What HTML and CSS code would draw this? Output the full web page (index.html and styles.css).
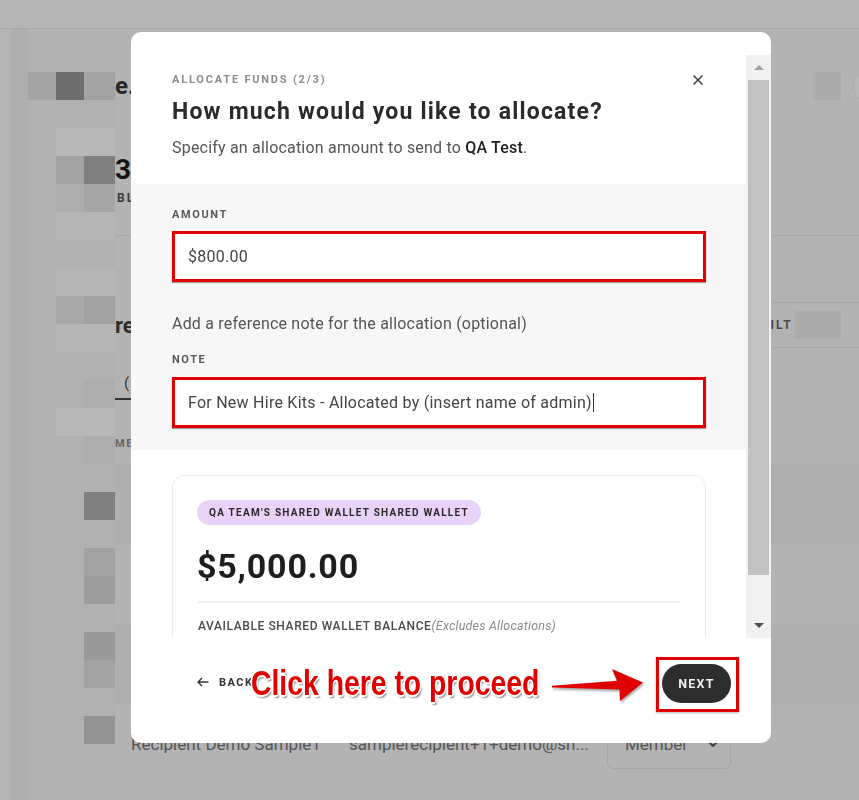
FILE: index.html
```html
<!DOCTYPE html>
<html lang="en">
<head>
<meta charset="utf-8">
<title>Allocate Funds</title>
<link rel="stylesheet" href="styles.css">
</head>
<body>
<div class="app">
  <header class="topbar"></header>
  <div class="app-body">
    <aside class="sidebar"><span class="strip strip-a"></span><span class="strip strip-b"></span></aside>
    <div class="mosaic" aria-hidden="true">
      <i class="k1"></i><i class="k2"></i><i class="k3"></i>
      <i class="ka"></i><i class="ka"></i><i class="ka"></i>
      <i class="ka"></i><i class="kb"></i><i class="kb"></i>
      <i class="ka"></i><i class="k3"></i><i class="k4"></i>
      <i class="ka"></i><i class="k5"></i><i class="k6"></i>
      <i class="ka"></i><i class="kl"></i><i class="kl"></i>
      <i class="ka"></i><i class="ka"></i><i class="ka"></i>
      <i class="ka"></i><i class="kl"></i><i class="kl"></i>
      <i class="ka"></i><i class="k7"></i><i class="k8"></i>
      <i class="ka"></i><i class="kl"></i><i class="kl"></i>
      <i class="ka"></i><i class="ka"></i><i class="ka"></i>
      <i class="ka"></i><i class="ka"></i><i class="k5"></i>
      <i class="ka"></i><i class="kb"></i><i class="kb"></i>
      <i class="ka"></i><i class="ka"></i><i class="k5"></i>
      <i class="ka"></i><i class="ka"></i><i class="ka"></i>
      <i class="ka"></i><i class="ka"></i><i class="k4"></i>
      <i class="ka"></i><i class="ka"></i><i class="ka"></i>
      <i class="ka"></i><i class="ka"></i><i class="k3"></i>
      <i class="ka"></i><i class="ka"></i><i class="k9"></i>
      <i class="ka"></i><i class="ka"></i><i class="ka"></i>
      <i class="ka"></i><i class="ka"></i><i class="k10"></i>
      <i class="ka"></i><i class="ka"></i><i class="k3"></i>
      <i class="ka"></i><i class="ka"></i><i class="ka"></i>
      <i class="ka"></i><i class="ka"></i><i class="k11"></i>
    </div>
    <main class="main">
      <section class="hero">
        <div class="hero-row">
          <h1 class="page-title">e.</h1>
          <div class="hero-right"><span class="redact"></span><span class="avatar"></span></div>
        </div>
        <div class="balance">30</div>
        <div class="balance-label">BL</div>
      </section>
      <section class="members">
        <div class="members-head">
          <h2 class="section-title">re</h2>
          <div class="filter-btn">FILT<span class="redact"></span></div>
        </div>
        <div class="tabs"><span class="tab">(</span></div>
        <div class="table-head"><span>ME</span></div>
        <div class="table-row striped"></div>
        <div class="table-row"></div>
        <div class="table-row striped"></div>
        <div class="table-row">
          <span class="cell-name">Recipient Demo Sample1</span>
          <span class="cell-email">samplerecipient+1+demo@sn...</span>
          <span class="cell-role">Member
            <svg class="chev" viewBox="0 0 10 6" width="10" height="6"><path d="M1 1l4 4 4-4" fill="none" stroke="#3a3a3a" stroke-width="1.8"/></svg>
          </span>
        </div>
      </section>
    </main>
  </div>
</div>

<div class="modal" role="dialog" aria-labelledby="modal-title">
  <div class="modal-scroll">
    <div class="modal-content">
      <header class="modal-head">
        <div class="head-text">
          <p class="step">ALLOCATE FUNDS (2/3)</p>
          <h1 class="title" id="modal-title">How much would you like to allocate?</h1>
          <p class="subtitle">Specify an allocation amount to send to <strong>QA Test</strong>.</p>
        </div>
        <button class="close" aria-label="Close">
          <svg viewBox="0 0 10 10" width="10" height="10"><path d="M0.5 0.5l9 9M9.5 0.5l-9 9" stroke="#333" stroke-width="1.4" fill="none"/></svg>
        </button>
      </header>

      <section class="form">
        <div class="field-label">AMOUNT</div>
        <div class="field">$800.00</div>
        <p class="hint">Add a reference note for the allocation (optional)</p>
        <div class="field-label">NOTE</div>
        <div class="field field-note">For New Hire Kits - Allocated by (insert name of admin)<span class="caret"></span></div>
      </section>

      <section class="wallet">
        <div class="wallet-card">
          <span class="pill">QA TEAM'S SHARED WALLET SHARED WALLET</span>
          <div class="wallet-amount">$5,000.00</div>
          <hr class="wallet-divider">
          <p class="wallet-label">AVAILABLE SHARED WALLET BALANCE<em>(Excludes Allocations)</em></p>
        </div>
      </section>
    </div>
    <div class="scrollbar" aria-hidden="true">
      <span class="sb-btn sb-up"></span>
      <span class="sb-thumb"></span>
      <span class="sb-track"></span>
      <span class="sb-btn sb-down"></span>
    </div>
  </div>

  <footer class="modal-foot">
    <button class="back">
      <svg viewBox="0 0 12 10" width="12" height="10"><path d="M11.5 5H1M5 1L1 5l4 4" fill="none" stroke="#333" stroke-width="1.4"/></svg>
      BACK
    </button>
    <span class="highlight"><button class="next">NEXT</button></span>
    <div class="callout">Click here to proceed</div>
    <svg class="callout-arrow" viewBox="0 0 100 42" width="100" height="42" aria-hidden="true">
      <polygon points="4,21.8 69,16.8 64,5 95,18.5 72,37 71.5,25.5 4,23.4" fill="#e00000"/>
    </svg>
  </footer>
</div>
</body>
</html>
```

FILE: styles.css
```css
* { box-sizing: border-box; }

html, body {
  margin: 0;
  height: 100%;
}

body {
  font-family: Roboto, "Noto Sans", sans-serif;
  background: #b3b3b3;
  overflow: hidden;
}

/* ---------- dimmed background page ---------- */
.app {
  display: flex;
  flex-direction: column;
  min-height: 100vh;
}

.topbar {
  height: 29px;
  background: #b5b5b5;
  border-bottom: 1px solid #a9a9a9;
  flex: none;
}

.app-body {
  display: flex;
  flex: 1;
}

.sidebar {
  display: flex;
  width: 28px;
  flex: none;
}

.strip { display: block; }
.strip-a { width: 11px; background: #b4b4b4; }
.strip-b { width: 17px; background: #afafaf; }

.mosaic {
  display: grid;
  grid-template-columns: 28px 28px 31px;
  grid-auto-rows: 28px;
  align-content: start;
  padding-top: 43px;
  width: 87px;
  flex: none;
}
.mosaic i { display: block; }
.ka { background: #b1b1b1; }
.kb { background: #b8b8b8; }
.kl { background: #b5b5b5; }
.k1 { background: #a4a4a4; }
.k2 { background: #6e6e6e; }
.k3 { background: #a3a3a3; }
.k4 { background: #808080; }
.k5 { background: #adadad; }
.k6 { background: #a6a6a6; }
.k7 { background: #a9a9a9; }
.k8 { background: #a2a2a2; }
.k9 { background: #9c9c9c; }
.k10 { background: #999999; }
.k11 { background: #939393; }

.main {
  flex: 1;
  min-width: 0;
  overflow: hidden;
}

.hero {
  padding-top: 43px;
  padding-bottom: 23px;
  border-bottom: 1px solid #a6a6a6;
}

.hero-row {
  display: flex;
  justify-content: space-between;
  align-items: center;
  height: 28px;
}

.page-title {
  margin: 0;
  font-size: 24px;
  line-height: 28px;
  font-weight: 700;
  color: #262626;
}

.hero-right {
  display: flex;
  align-items: center;
  gap: 12px;
  margin-right: -30px;
}

.redact {
  display: inline-block;
  width: 28px;
  height: 28px;
  background: #acacac;
}

.avatar {
  width: 36px;
  height: 36px;
  border-radius: 50%;
  background: #b8b8b8;
  border: 1px solid #aaaaaa;
}

.balance {
  margin-top: 56px;
  font-size: 28px;
  line-height: 28px;
  font-weight: 700;
  color: #141414;
}

.balance-label {
  padding-left: 2px;
  font-size: 12px;
  line-height: 28px;
  font-weight: 700;
  letter-spacing: 2px;
  color: #3a3a3a;
}

.members { margin-top: 66px; }

.members-head {
  display: flex;
  justify-content: space-between;
  align-items: center;
  height: 46px;
}

.section-title {
  margin: 0;
  font-size: 22px;
  font-weight: 700;
  color: #2e2e2e;
}

.filter-btn {
  display: flex;
  align-items: center;
  gap: 2px;
  width: 146px;
  height: 46px;
  margin-right: -30px;
  padding-left: 18px;
  border: 1px solid #a6a6a6;
  border-radius: 4px;
  font-size: 12px;
  font-weight: 700;
  letter-spacing: 2px;
  color: #4a4a4a;
}
.filter-btn .redact { width: 46px; background: #ababab; }

.tabs {
  margin-top: 20px;
  display: flex;
}

.tab {
  padding: 0 0 0 9px;
  width: 40px;
  line-height: 30px;
  font-size: 15px;
  color: #333;
  border-bottom: 2px solid #333;
}

.table-head {
  margin-top: 36px;
  line-height: 16px;
  font-size: 11px;
  font-weight: 700;
  letter-spacing: 1.5px;
  color: #666;
}

.table-row {
  height: 80px;
  display: grid;
  grid-template-columns: 218px 258px 124px;
  align-items: center;
  padding-left: 16px;
}
.table-head + .table-row { margin-top: 12px; }
.table-row.striped { background: #afafaf; }

.cell-name, .cell-email {
  font-size: 17px;
  color: #555;
}

.cell-role {
  display: flex;
  align-items: center;
  justify-content: space-between;
  height: 49px;
  padding: 0 12px 0 17px;
  border: 1px solid #a6a6a6;
  border-radius: 6px;
  font-size: 17px;
  color: #555;
}

/* ---------- modal ---------- */
.modal {
  position: fixed;
  left: 131px;
  top: 32px;
  width: 640px;
  height: 711px;
  background: #fff;
  border-radius: 10px;
  padding-top: 23px;
  display: flex;
  flex-direction: column;
  overflow: hidden;
}

.modal-scroll {
  flex: 0 0 583px;
  display: flex;
  overflow: hidden;
}

.modal-content {
  flex: 1;
  min-width: 0;
  overflow: hidden;
}

.modal-head {
  display: flex;
  justify-content: space-between;
  align-items: flex-start;
  padding: 17px 40px 25px 41px;
}

.step {
  margin: 0;
  font-size: 11px;
  line-height: 16px;
  font-weight: 700;
  letter-spacing: 1.8px;
  color: #8d8d8d;
}

.title {
  margin: 9px 0 0;
  font-size: 23px;
  line-height: 30px;
  font-weight: 700;
  letter-spacing: 1.2px;
  color: #2b2b2b;
}

.subtitle {
  margin: 10px 0 0;
  font-size: 16px;
  line-height: 22px;
  letter-spacing: 0.2px;
  color: #555;
}
.subtitle strong { font-weight: 500; color: #222; }

.close {
  margin: 3px 3px 0 0;
  padding: 0;
  border: 0;
  background: none;
  display: flex;
}

.form {
  background: #f7f7f7;
  padding: 23px 40px 22px 41px;
}

.field-label {
  font-size: 11px;
  line-height: 16px;
  font-weight: 700;
  letter-spacing: 1.6px;
  color: #5a5a5a;
}

.field {
  margin-top: 8px;
  height: 51px;
  display: flex;
  align-items: center;
  padding: 0 13px;
  border: 3px solid #e00000;
  background: #fff;
  box-shadow: 0 1px 1px rgba(0, 0, 0, 0.35);
  font-size: 16px;
  letter-spacing: 0.25px;
  color: #444;
}
.field-note { margin-top: 9px; }

.caret {
  width: 1px;
  height: 19px;
  margin-left: 1px;
  background: #333;
}

.hint {
  margin: 31px 0 17px;
  font-size: 16px;
  line-height: 22px;
  letter-spacing: 0.2px;
  color: #555;
}

.wallet { padding: 25px 40px 0 41px; }

.wallet-card {
  border: 1px solid #ececec;
  border-radius: 12px;
  padding: 24px 25px 40px 24px;
}

.pill {
  display: flex;
  align-items: center;
  width: max-content;
  height: 25px;
  padding: 0 12px;
  border-radius: 13px;
  background: #e9d2f8;
  font-size: 10px;
  font-weight: 700;
  letter-spacing: 1.25px;
  color: #2b2b2b;
}

.wallet-amount {
  margin-top: 21px;
  font-size: 34px;
  line-height: 40px;
  font-weight: 700;
  letter-spacing: 0.8px;
  color: #1e1e1e;
}

.wallet-divider {
  margin: 15px 0 0 1px;
  border: 0;
  border-top: 2px solid #efefef;
}

.wallet-label {
  margin: 14px 0 0 1px;
  font-size: 12px;
  line-height: 18px;
  font-weight: 500;
  letter-spacing: 0.6px;
  color: #4a4a4a;
}
.wallet-label em {
  font-weight: 400;
  font-size: 12.5px;
  letter-spacing: 0.2px;
  color: #8a8a8a;
}

/* fake classic scrollbar */
.scrollbar {
  width: 25px;
  flex: none;
  display: flex;
  flex-direction: column;
  background: #f1f1f1;
}

.sb-btn {
  height: 25px;
  flex: none;
  display: flex;
  align-items: center;
  justify-content: center;
}
.sb-up::before {
  content: "";
  border-left: 5px solid transparent;
  border-right: 5px solid transparent;
  border-bottom: 5px solid #a3a3a3;
}
.sb-down::before {
  content: "";
  border-left: 5px solid transparent;
  border-right: 5px solid transparent;
  border-top: 5px solid #505050;
}
.sb-thumb {
  height: 495px;
  margin: 0 2px;
  background: #c1c1c1;
  flex: none;
}
.sb-track { flex: 1; }

/* footer */
.modal-foot {
  position: relative;
  flex: 1;
  display: flex;
  align-items: center;
  justify-content: space-between;
  padding: 19px 32px 31px 66px;
}

.back {
  display: flex;
  align-items: center;
  gap: 10px;
  margin-bottom: 5px;
  padding: 0;
  border: 0;
  background: none;
  font-family: Roboto, "Noto Sans", sans-serif;
  font-size: 11px;
  font-weight: 700;
  letter-spacing: 1.5px;
  color: #333;
}

.highlight {
  display: flex;
  border: 3px solid #e00000;
  padding: 4px 5px 6px 3px;
  box-shadow: 0 1px 2px rgba(0, 0, 0, 0.3);
}

.next {
  width: 69px;
  height: 39px;
  border: 0;
  border-radius: 20px;
  background: #2d2d2d;
  color: #eeeeee;
  font-family: Roboto, "Noto Sans", sans-serif;
  font-size: 12.5px;
  font-weight: 700;
  letter-spacing: 1.2px;
}

/* annotation overlay */
.callout {
  position: absolute;
  left: 120px;
  top: 25px;
  font-family: "Liberation Sans", Arial, sans-serif;
  font-size: 35px;
  line-height: 40px;
  font-weight: 700;
  color: #e00000;
  white-space: nowrap;
  transform: scaleX(0.81);
  transform-origin: left center;
  text-shadow:
    -1px -1px 0 #fff, 1px -1px 0 #fff, -1px 1px 0 #fff, 1px 1px 0 #fff,
    0 -2px 0 #fff, 0 2px 0 #fff, -2px 0 0 #fff, 2px 0 0 #fff,
    2px 3px 2px rgba(0, 0, 0, 0.45);
}

.callout-arrow {
  position: absolute;
  left: 417px;
  top: 26px;
  filter: drop-shadow(1px 2px 1px rgba(0, 0, 0, 0.35));
}
```
